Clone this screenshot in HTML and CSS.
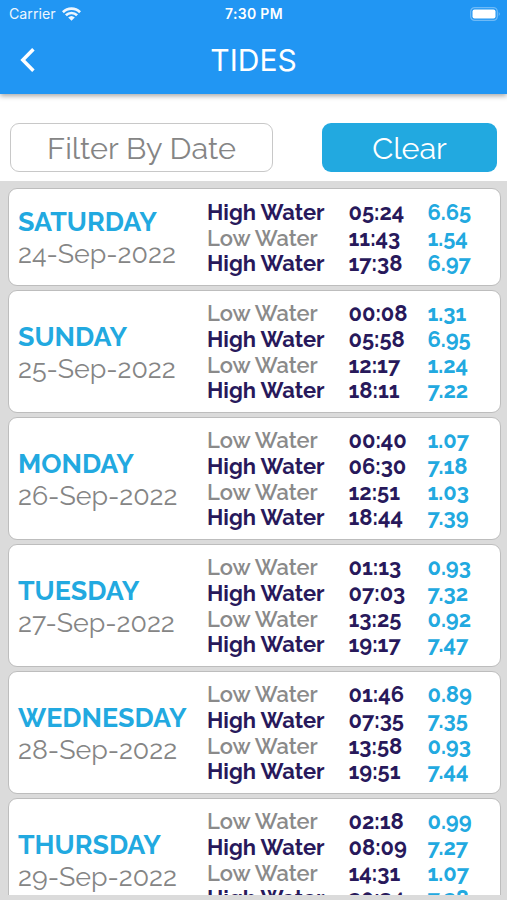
FILE: index.html
```
<!DOCTYPE html>
<html lang="en">
<head>
  <meta charset="UTF-8" />
  <meta name="viewport" content="width=device-width, initial-scale=1" />
  <title>Tides</title>
  <link rel="stylesheet" href="styles.css">
</head>
<body>

<header>
  <div class="status-bar">
    <div class="carrier">
      <span>Carrier</span>
      <svg class="wifi" viewBox="0 0 19 14" width="19" height="14">
        <path d="M.9 5.2a12.3 12.3 0 0 1 17.2 0M3.9 8.3a8 8 0 0 1 11.2 0" fill="none" stroke="#fff" stroke-width="2.7"/>
        <path d="M9.5 13.8 6.2 10.5a4.8 4.8 0 0 1 6.6 0z" fill="#fff"/>
      </svg>
    </div>
    <span class="clock">7:30 PM</span>
    <svg class="battery" viewBox="0 0 31 14" width="31" height="14">
      <rect x=".7" y=".6" width="26.6" height="12.8" rx="4" fill="none" stroke="#fff" stroke-opacity=".35" stroke-width="1.2"/>
      <rect x="2.5" y="2.5" width="23" height="9" rx="2" fill="#fff"/>
      <path d="M28.8 4.8q1.8 2.2 0 4.4z" fill="#fff" fill-opacity=".5"/>
    </svg>
  </div>
  <div class="nav-bar">
    <button class="back" aria-label="Back">
      <svg viewBox="0 0 15 24" width="15" height="24">
        <path d="M13.4 1.2 2.8 12l10.6 10.8" fill="none" stroke="#fff" stroke-width="3.5"/>
      </svg>
    </button>
    <h1>TIDES</h1>
  </div>
</header>

<div class="filter-bar">
  <button class="btn filter"><span>Filter By Date</span></button>
  <button class="btn clear"><span>Clear</span></button>
</div>

<main class="tide-list">
  <!-- Saturday -->
  <section class="tide-card">
    <div class="day"><h2>SATURDAY</h2><p>24-Sep-2022</p></div>
    <div class="tides">
      <div class="tide high"><span>High Water</span><time>05:24</time><b>6.65</b></div>
      <div class="tide low"><span>Low Water</span><time>11:43</time><b>1.54</b></div>
      <div class="tide high"><span>High Water</span><time>17:38</time><b>6.97</b></div>
    </div>
  </section>

  <!-- Sunday -->
  <section class="tide-card">
    <div class="day"><h2>SUNDAY</h2><p>25-Sep-2022</p></div>
    <div class="tides">
      <div class="tide low"><span>Low Water</span><time>00:08</time><b>1.31</b></div>
      <div class="tide high"><span>High Water</span><time>05:58</time><b>6.95</b></div>
      <div class="tide low"><span>Low Water</span><time>12:17</time><b>1.24</b></div>
      <div class="tide high"><span>High Water</span><time>18:11</time><b>7.22</b></div>
    </div>
  </section>

  <!-- Monday -->
  <section class="tide-card">
    <div class="day"><h2>MONDAY</h2><p>26-Sep-2022</p></div>
    <div class="tides">
      <div class="tide low"><span>Low Water</span><time>00:40</time><b>1.07</b></div>
      <div class="tide high"><span>High Water</span><time>06:30</time><b>7.18</b></div>
      <div class="tide low"><span>Low Water</span><time>12:51</time><b>1.03</b></div>
      <div class="tide high"><span>High Water</span><time>18:44</time><b>7.39</b></div>
    </div>
  </section>

  <!-- Tuesday -->
  <section class="tide-card">
    <div class="day"><h2>TUESDAY</h2><p>27-Sep-2022</p></div>
    <div class="tides">
      <div class="tide low"><span>Low Water</span><time>01:13</time><b>0.93</b></div>
      <div class="tide high"><span>High Water</span><time>07:03</time><b>7.32</b></div>
      <div class="tide low"><span>Low Water</span><time>13:25</time><b>0.92</b></div>
      <div class="tide high"><span>High Water</span><time>19:17</time><b>7.47</b></div>
    </div>
  </section>

  <!-- Wednesday -->
  <section class="tide-card">
    <div class="day"><h2>WEDNESDAY</h2><p>28-Sep-2022</p></div>
    <div class="tides">
      <div class="tide low"><span>Low Water</span><time>01:46</time><b>0.89</b></div>
      <div class="tide high"><span>High Water</span><time>07:35</time><b>7.35</b></div>
      <div class="tide low"><span>Low Water</span><time>13:58</time><b>0.93</b></div>
      <div class="tide high"><span>High Water</span><time>19:51</time><b>7.44</b></div>
    </div>
  </section>

  <!-- Thursday -->
  <section class="tide-card">
    <div class="day"><h2>THURSDAY</h2><p>29-Sep-2022</p></div>
    <div class="tides">
      <div class="tide low"><span>Low Water</span><time>02:18</time><b>0.99</b></div>
      <div class="tide high"><span>High Water</span><time>08:09</time><b>7.27</b></div>
      <div class="tide low"><span>Low Water</span><time>14:31</time><b>1.07</b></div>
      <div class="tide high"><span>High Water</span><time>20:34</time><b>7.28</b></div>
    </div>
  </section>
</main>

</body>
</html>
```
FILE: styles.css
```
* { box-sizing: border-box; }
body {
  font-family: Raleway, Lato, sans-serif;
  margin: 0;
  height: 900px;
  overflow: hidden;
  display: flex;
  flex-direction: column;
  background-color: #dbdbdb;
}
h1, h2, p { margin: 0; }
header {
  height: 94px;
  flex: none;
  background-color: #2196f3;
  color: #fff;
  font-family: Inter, sans-serif;
  box-shadow: 0 2px 5px rgba(0,0,0,0.35);
  z-index: 1;
}
.status-bar {
  height: 27px;
  padding: 0 6px 0 9px;
  display: grid;
  grid-template-columns: 1fr auto 1fr;
  align-items: center;
  font-size: 14.2px;
}
.carrier {
  display: flex;
  align-items: center;
  gap: 6px;
  opacity: 0.92;
}
.clock {
  font-size: 14px;
  font-weight: 600;
  letter-spacing: 0.3px;
  margin-right: 2px;
}
.battery { justify-self: end; }
.nav-bar {
  height: 66px;
  padding: 0 20px;
  display: grid;
  grid-template-columns: 1fr auto 1fr;
  align-items: center;
}
.nav-bar h1 {
  font-size: 30px;
  font-weight: 400;
}
.back {
  background: none;
  border: none;
  padding: 0;
  display: flex;
}
.filter-bar {
  height: 87.4px;
  flex: none;
  padding: 29px 10px 0;
  display: flex;
  justify-content: space-between;
  background-color: #fff;
}
.btn {
  height: 49px;
  border-radius: 9px;
  font-family: inherit;
  font-size: 30.6px;
  font-weight: 400;
  padding: 1px 0 0;
}
.filter {
  width: 263px;
  border: 1.5px solid #c8c8c8;
  background-color: #fff;
  color: #858585;
}
.clear {
  width: 175px;
  border: none;
  background-color: #22a9e0;
  color: #fff;
}
.tide-list {
  height: 713.6px;
  flex: none;
  padding: 7px 6px 0 7.5px;
  overflow: hidden;
  display: flex;
  flex-direction: column;
  gap: 4px;
}
.tide-card {
  flex: none;
  display: flex;
  align-items: center;
  padding: 10.5px 9.5px 7.9px;
  background-color: #fff;
  border: 1px solid #bdbdbd;
  border-radius: 9px;
}
.day {
  width: 189px;
  line-height: 32px;
  white-space: nowrap;
}
.day h2 {
  color: #22a9e0;
  font-size: 26.8px;
  font-weight: 700;
}
.day p {
  color: #858585;
  font-size: 26.8px;
}
.tide {
  display: grid;
  grid-template-columns: 141.5px 79px auto;
  height: 25.67px;
  line-height: 25.67px;
  font-size: 21.9px;
  font-weight: 700;
  color: #28195b;
  white-space: nowrap;
}
.low span {
  color: #8a8a8a;
  font-weight: 600;
}
.tide b {
  color: #22a9e0;
  font-weight: 700;
}
```
